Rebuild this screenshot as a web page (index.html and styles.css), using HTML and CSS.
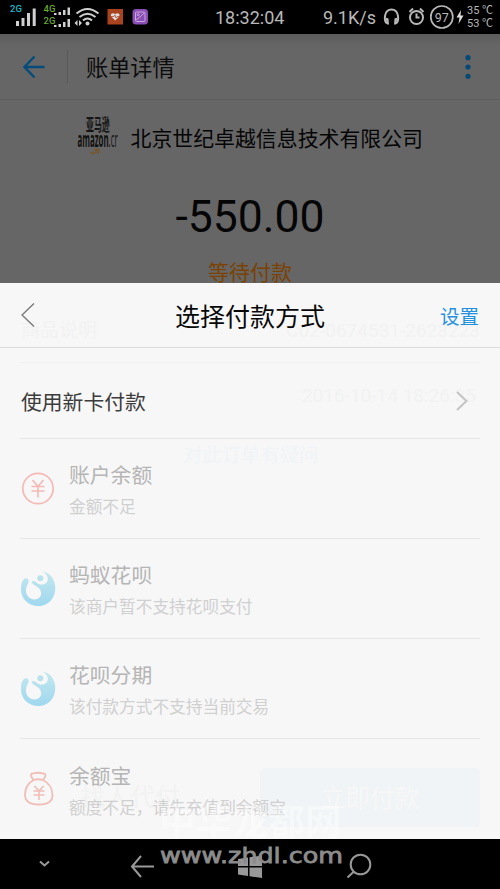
FILE: index.html
```html
<!DOCTYPE html>
<html lang="zh-CN">
<head>
<meta charset="utf-8">
<title>账单详情</title>
<link rel="stylesheet" href="styles.css">
</head>
<body>
<div class="phone">
  <header class="status">
    <svg class="status-icons" width="160" height="34" viewBox="0 0 160 34">
      <g class="lbl"><text x="10" y="11.500" fill="#21b8c8">2G</text><text x="43.500" y="11.500" fill="#6aa52e">4G</text><text x="43.500" y="23.500" fill="#6aa52e">2G</text></g>
      <g fill="#d0d0d0">
        <rect x="16" y="21" width="3" height="5"/><rect x="21.500" y="18" width="3" height="8"/><rect x="27" y="13" width="3" height="13"/><rect x="32.700" y="8.500" width="3" height="17.500"/>
        <rect x="54" y="13" width="2.500" height="2"/><rect x="58.500" y="12" width="2.500" height="3"/><rect x="63" y="10" width="2.500" height="5"/><rect x="67.500" y="7.500" width="2.500" height="7.500"/>
        <rect x="54" y="25" width="2.500" height="2"/><rect x="58.500" y="24" width="2.500" height="3"/><rect x="63" y="22" width="2.500" height="5"/><rect x="67.500" y="19" width="2.500" height="8"/>
        <path d="M74.500 23l3-3v6zM82 23l-3-3v6z"/><circle cx="87.500" cy="23.500" r="2"/>
      </g>
      <g fill="none" stroke="#d0d0d0" stroke-width="2"><path d="M76.500 13.500q11-9 22 0M79.500 17q8-6.500 16 0M83 20.500q4.500-4 9 0"/></g>
      <rect x="107.500" y="9" width="15.500" height="15.500" fill="#a9421f"/>
      <path d="M115.200 20.500l-4.200-4.200c-1-3 2.500-4.300 4.200-2 1.700-2.300 5.200-1 4.200 2z" fill="#ddd"/><path d="M111 16.500h3l1-1.500 1 3 1-1.500h3" fill="none" stroke="#a9421f" stroke-width=".7"/>
      <rect x="132.500" y="9" width="15.500" height="15.500" rx="3.500" fill="#8a4fb5"/>
      <g fill="none" stroke="#c9a8dc"><rect x="135.500" y="12" width="9.500" height="9.500" rx="1"/><path d="M136 20l4-3 4-4"/><circle cx="138.200" cy="14.700" r="1"/></g>
    </svg>
    <span class="clock">18:32:04</span>
    <span class="speed">9.1K/s</span>
    <svg class="status-right" width="80" height="34" viewBox="380 0 80 34">
      <g fill="none" stroke="#b8b8b8" stroke-width="2">
        <path d="M387 23.500c-3.500-3-3-14 4.500-14s8 11 4.500 14"/>
        <circle cx="416.500" cy="17.500" r="6.500"/><path d="M416.500 13.500v4h3M409.500 12l3.500-3.500M423.500 12l-3.500-3.500"/>
        <circle cx="441.800" cy="17" r="11" stroke-width="1.700"/>
      </g>
      <path d="M385.500 17.500l3 1 .5 6h-2zM397.500 17.500l-3 1-.5 6h2z" fill="#b8b8b8"/>
      <text x="441.700" y="21.500" text-anchor="middle" class="battery">97</text>
    </svg>
    <svg class="bolt" width="8" height="16" viewBox="0 0 8 16"><path d="M5 1L.5 8.500h3L2.500 15 7.500 6.500h-3z" fill="#ddd"/></svg>
    <div class="temps"><span>35 ℃</span><span>53 ℃</span></div>
  </header>

  <nav class="topbar">
    <svg width="24" height="24" viewBox="0 0 24 24"><path d="M22.500 12H3M12.500 1.500L2.500 12l10 10.500" fill="none" stroke="#054c7b" stroke-width="2.400"/></svg>
    <span class="divider"></span>
    <h1>账单详情</h1>
    <svg class="more" width="6" height="24" viewBox="0 0 6 24" fill="#054974"><circle cx="3" cy="2.700" r="2.600"/><circle cx="3" cy="12" r="2.600"/><circle cx="3" cy="21.300" r="2.600"/></svg>
  </nav>

  <section class="bill">
    <div class="merchant">
      <svg class="logo" width="42" height="42" viewBox="0 0 42 42">
        <text transform="translate(9 15) scale(.48 1)" class="logo-cn">亚马逊</text>
        <text transform="translate(.5 31) scale(.375 1)" class="logo-en">amazon<tspan class="logo-thin">.cr</tspan></text>
        <path d="M13 36c3 3 7 1 8-3M17 33.500h4.500v4.500" fill="none" stroke="#785526" stroke-width="1.300"/>
      </svg>
      <span>北京世纪卓越信息技术有限公司</span>
    </div>
    <div class="amount">-550.00</div>
    <div class="state">等待付款</div>
  </section>

  <main class="sheet">
    <div class="ghost g-goods">商品说明</div>
    <div class="ghost g-order">C02-0674531-2623223</div>
    <div class="ghost g-rule"></div>
    <div class="ghost g-date">2016-10-14 18:26:35</div>
    <div class="ghost g-help">对此订单有疑问</div>
    <div class="ghost g-other">找人代付</div>
    <div class="ghost g-pay">立即付款</div>

    <div class="sheet-head">
      <svg width="16" height="26" viewBox="0 0 16 26"><path d="M14 1.500L2 13l12 11.500" fill="none" stroke="#777" stroke-width="1.300"/></svg>
      <h2>选择付款方式</h2>
      <a>设置</a>
    </div>
    <div class="new-card">
      <span>使用新卡付款</span>
      <svg width="14" height="22" viewBox="0 0 14 22"><path d="M2 2l9.500 9L2 20" fill="none" stroke="#c4c4c4" stroke-width="2"/></svg>
    </div>
    <div class="method">
      <svg width="36" height="36" viewBox="0 0 36 36" fill="none" stroke="#f4b9b4" stroke-width="1.700"><circle cx="17" cy="17.500" r="15.200"/><path d="M11.500 9l5.500 6.500 5.500-6.500M10.500 15.500h13M10.500 20h13M17 15v11.500" stroke-width="1.600"/></svg>
      <div class="info"><h3>账户余额</h3><p>金额不足</p></div>
    </div>
    <div class="method">
      <svg width="36" height="36" viewBox="0 0 36 36"><defs><linearGradient id="blue" x2="0" y2="1"><stop stop-color="#c4e7ee"/><stop offset="1" stop-color="#9fd8ef"/></linearGradient></defs>
        <path id="flower" fill="url(#blue)" d="M22 .5C30 2.500 34.300 9 34.300 17.500C34 28 26.500 35 17.500 35C7.500 35 0 28 0 18.500C0 12 1.500 8 4.500 7.300C7.500 7 8.500 10 7 12.500C2.500 20 6 28 13 28.500C19 28.500 21.500 24 19.500 19.500C17.500 15 12 14.500 10.500 11C12 9 14 10.500 16 12C20 15 27 13.500 26.800 7.500C26.500 4 24 2.500 22 .5Z"/><circle cx="19.300" cy="7.300" r="3" fill="#b9e2ed"/></svg>
      <div class="info"><h3>蚂蚁花呗</h3><p>该商户暂不支持花呗支付</p></div>
    </div>
    <div class="method">
      <svg width="36" height="36" viewBox="0 0 36 36"><use href="#flower"/><circle cx="19.300" cy="7.300" r="3" fill="#b9e2ed"/></svg>
      <div class="info"><h3>花呗分期</h3><p>该付款方式不支持当前交易</p></div>
    </div>
    <div class="method last">
      <svg width="36" height="36" viewBox="0 0 36 36" fill="none" stroke="#f1bdb7" stroke-width="1.800"><path d="M12.500 9L10.500 6Q9 2.500 12 2.500Q17 1 22 2.500Q25.500 2.500 24 6L22 9Q17 7.500 12.500 9C7 12 4 18 4 24C4 31 9 33.500 18 33.500C27 33.500 31.500 31 31.500 24C31.500 18 28 12 22 9"/><path d="M13.500 15l4.500 5 4.500-5M12.500 20h11M12.500 24h11M18 20v9" stroke-width="1.600"/></svg>
      <div class="info"><h3>余额宝</h3><p>额度不足，请先充值到余额宝</p></div>
    </div>
  </main>

  <footer class="nav">
    <svg width="500" height="50" viewBox="0 0 500 50" fill="none" stroke="#999" stroke-width="2">
      <path d="M40 22.500l4.500 4 4.500-4M154 27.500h-22M141 17L132 27.500l9 10.500"/>
      <g fill="#999" stroke="none"><path d="M238 20l10-1.500V27h-10zM249.500 18.300L262 16.500V27h-12.500zM238 28.500h10V37l-10-1.500zM249.500 28.500H262V39l-12.500-1.800z"/></g>
      <circle cx="360.500" cy="25.500" r="9.800"/><path d="M354 32.500l-6.500 6"/>
    </svg>
  </footer>
  <div class="mark-cn">中华龙都网</div>
  <svg class="mark-url" width="184" height="24" viewBox="0 0 184 24"><text x="0" y="17" textLength="183" lengthAdjust="spacingAndGlyphs">www.zhdl.com</text></svg>
</div>
</body>
</html>
```
FILE: styles.css
```css
* { box-sizing: border-box; }
body { margin: 0; font-family: Roboto, "Noto Sans CJK SC", sans-serif; }
h1, h2, h3, p { margin: 0; font-weight: 400; }
svg { display: block; flex: none; }
.phone { position: relative; width: 500px; height: 889px; overflow: hidden; display: flex; flex-direction: column; background: #666; }

.status { height: 34px; flex: none; display: flex; align-items: center; background: #000; color: #b8b8b8; }
.lbl { font: 500 9.500px Roboto, sans-serif; }
.clock { width: 70px; margin-left: 55px; font-size: 18px; white-space: nowrap; }
.speed { width: 57px; margin-left: 38px; font-size: 18px; white-space: nowrap; }
.battery { font: 12.500px Roboto, sans-serif; fill: #b8b8b8; }
.bolt { margin-left: -4px; }
.temps { display: flex; flex-direction: column; margin-left: 3px; font-size: 11px; line-height: 13px; white-space: nowrap; }

.topbar { height: 66px; flex: none; display: flex; align-items: center; padding: 0 29px 0 22px; background: linear-gradient(#5c5c5c, #666 12px); border-bottom: 1px solid #5d5d5d; }
.divider { width: 1px; height: 33px; margin: 0 18px 0 21px; background: #5a5a5a; }
.topbar h1 { padding-top: 2px; font-size: 22.200px; line-height: 32px; color: #0c0c0c; }
.more { margin-left: auto; }

.bill { height: 183px; flex: none; display: flex; flex-direction: column; align-items: center; color: #050505; }
.merchant { width: 347px; height: 42px; margin-top: 16px; display: flex; align-items: center; gap: 12px; font-size: 20.900px; white-space: nowrap; }
.logo { overflow: visible; }
.logo-cn { font: 700 16.500px/20px "Noto Sans CJK SC", sans-serif; fill: #151515; }
.logo-en { font: 700 21px/24px "Open Sans", sans-serif; fill: #111; }
.logo-thin { font-weight: 400; }
.amount { margin-top: 32px; font-size: 44.500px; line-height: 54px; }
.state { margin-top: 14px; font-size: 21px; line-height: 30px; color: #7b4100; }

.sheet { position: relative; height: 556px; flex: none; background: #f7f7f7; }
.sheet-head { position: relative; height: 65px; display: flex; align-items: center; justify-content: space-between; padding: 0 21px 0 20px; border-bottom: 1px solid #dcdcdc; }
.sheet-head h2 { margin-left: 24px; font-size: 25px; color: #080808; }
.sheet-head a { font-size: 19.500px; color: #2491df; }
.new-card { position: relative; height: 91px; margin: 0 20px; padding: 16px 11px 0 1px; display: flex; align-items: center; justify-content: space-between; border-bottom: 1px solid #e5e5e5; font-size: 20.800px; color: #3c3c3c; }
.method { position: relative; height: 100px; margin: 0 20px; padding-left: 1px; display: flex; align-items: center; gap: 12px; border-bottom: 1px solid #e5e5e5; }
.method.last { border-bottom: 0; }
.info { padding-top: 7px; }
.method h3 { font-size: 20.800px; line-height: 32px; color: #b5b5b5; }
.method p { font-size: 16.700px; line-height: 32px; color: #d0d0d0; white-space: nowrap; }

.ghost { position: absolute; color: #f2f2f2; font-size: 19px; line-height: 28px; white-space: nowrap; }
.g-goods { left: 21px; top: 34px; }
.g-order { right: 20px; top: 34px; }
.g-rule { left: 20px; right: 20px; top: 79px; height: 1px; background: #f1f1f1; }
.g-date { left: 302px; top: 99px; }
.g-help { left: 183px; top: 159px; font-size: 19.400px; color: #f0f4f7; }
.g-other { left: 80px; top: 501px; font-size: 25px; }
.g-pay { left: 260px; top: 485px; width: 220px; height: 59px; border-radius: 5px; background: #f0f4f6; color: #f7f7f7; font-size: 24.500px; line-height: 61px; text-align: center; }

.nav { height: 50px; flex: none; background: #000; }
.mark-cn { position: absolute; left: 159px; top: 798px; font: 700 36.500px/44px "Noto Sans CJK SC", sans-serif; color: transparent; background: linear-gradient(rgba(255, 255, 255, .42) 41px, transparent 41px); background-clip: text; -webkit-background-clip: text; white-space: nowrap; }
.mark-url { position: absolute; left: 160px; top: 846px; overflow: visible; }
.mark-url text { font: 400 21.500px "DejaVu Sans", sans-serif; fill: #8c8c8c; stroke: #8c8c8c; stroke-width: .8px; }
```
